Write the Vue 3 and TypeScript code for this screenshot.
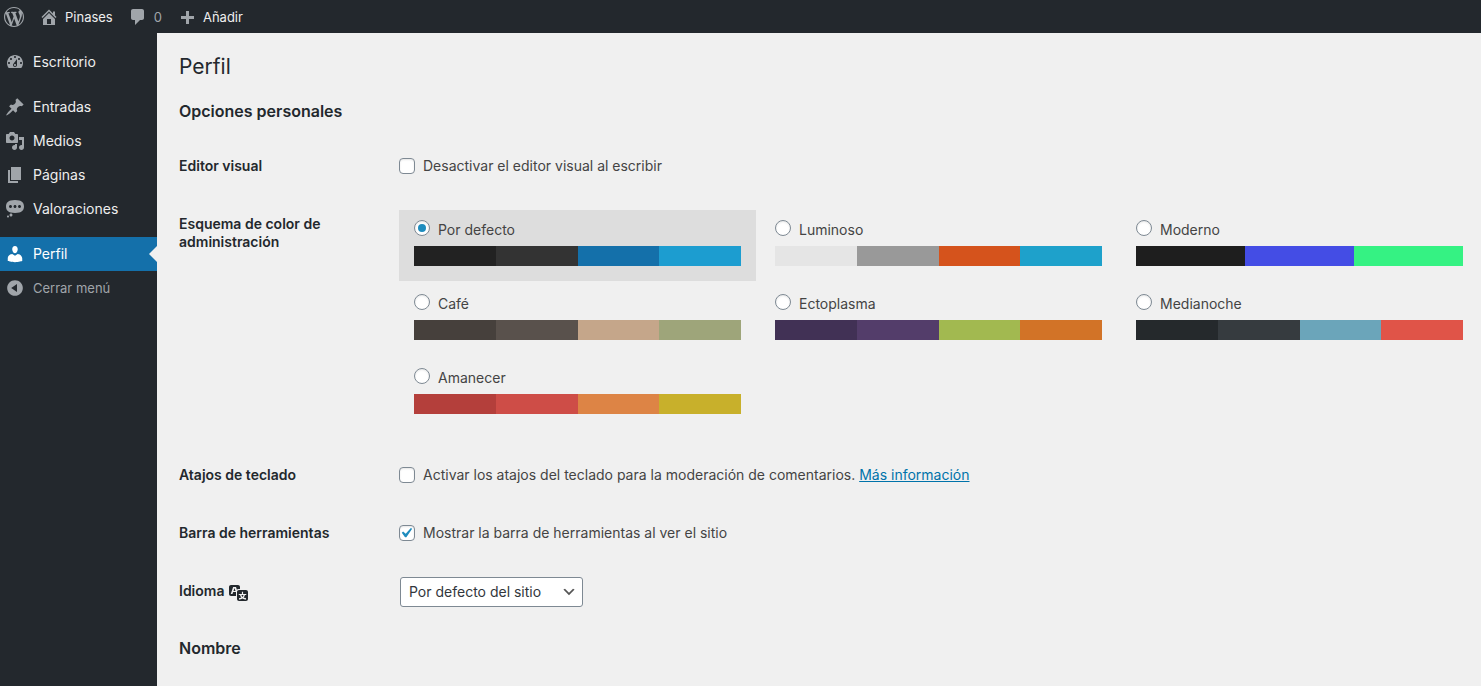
<script setup lang="ts">
import { ref } from 'vue'

interface MenuItem {
  label: string
  icon: string
  gap?: boolean
  current?: boolean
}

interface Scheme {
  id: string
  label: string
  colors: string[]
}

const icons: Record<string, string> = {
  wordpress:
    'M20 10c0-5.51-4.49-10-10-10C4.48 0 0 4.49 0 10c0 5.52 4.48 10 10 10 5.51 0 10-4.48 10-10zM7.78 15.37L4.37 6.22c.55-.02 1.17-.08 1.17-.08.5-.06.44-1.13-.06-1.11 0 0-1.45.11-2.37.11-.18 0-.37 0-.58-.01C4.12 2.69 6.87 1.11 10 1.11c2.33 0 4.45.87 6.05 2.34-.68-.11-1.65.39-1.65 1.58 0 .74.45 1.36.9 2.1.35.61.55 1.36.55 2.46 0 1.49-1.4 5-1.4 5l-3.03-8.37c.54-.02.82-.17.82-.17.5-.05.44-1.25-.06-1.22 0 0-1.44.12-2.38.12-.87 0-2.33-.12-2.33-.12-.5-.03-.56 1.2-.06 1.22l.92.08 1.26 3.41zM17.41 10c.24-.64.74-1.87.43-4.25.7 1.29 1.05 2.71 1.05 4.25 0 3.29-1.73 6.24-4.4 7.78.97-2.59 1.94-5.2 2.92-7.78zM6.1 18.09C3.12 16.65 1.11 13.53 1.11 10c0-1.3.23-2.48.72-3.59C3.25 10.3 4.67 14.2 6.1 18.09zm4.03-6.63l2.58 6.98c-.86.29-1.76.45-2.71.45-.79 0-1.57-.11-2.29-.33.81-2.38 1.62-4.74 2.42-7.1z',
  home: 'M16 8.5l1.53 1.53-1.06 1.06L10 4.6l-6.47 6.49-1.06-1.06L10 2.5l4 4v-2h2v4zm-6-2.46l6 5.99V18H4v-5.97zM12 17v-5H8v5h4z',
  comment: 'M5 2h9c1.1 0 2 .9 2 2v7c0 1.1-.9 2-2 2h-2l-5 5v-5H5c-1.1 0-2-.9-2-2V4c0-1.1.9-2 2-2z',
  plus: 'M17 9v3h-5v5H9v-5H4V9h5V4h3v5h5z',
  dashboard:
    'M3.76 16h12.48c1.1-1.37 1.76-3.11 1.76-5 0-4.42-3.58-8-8-8s-8 3.58-8 8c0 1.89.66 3.63 1.76 5zM10 4c.55 0 1 .45 1 1s-.45 1-1 1-1-.45-1-1 .45-1 1-1zM6 6c.55 0 1 .45 1 1s-.45 1-1 1-1-.45-1-1 .45-1 1-1zm8 0c.55 0 1 .45 1 1s-.45 1-1 1-1-.45-1-1 .45-1 1-1zm-5.37 5.55L12 7v6c0 1.1-.9 2-2 2s-2-.9-2-2c0-.57.24-1.08.63-1.45zM4 10c.55 0 1 .45 1 1s-.45 1-1 1-1-.45-1-1 .45-1 1-1zm12 0c.55 0 1 .45 1 1s-.45 1-1 1-1-.45-1-1 .45-1 1-1zm-5 3c0-.55-.45-1-1-1s-1 .45-1 1 .45 1 1 1 1-.45 1-1z',
  post: 'M10.44 3.02l1.82-1.82 6.36 6.35-1.83 1.82c-1.05-.68-2.48-.57-3.41.36l-.75.75c-.92.93-1.04 2.35-.35 3.41l-1.83 1.82-2.41-2.41-2.8 2.79c-.42.42-3.38 2.71-3.8 2.29s1.86-3.39 2.28-3.81l2.79-2.79L4.1 9.36l1.83-1.82c1.05.69 2.48.57 3.4-.36l.75-.75c.93-.92 1.05-2.35.36-3.41z',
  media:
    'M13 11V4c0-.55-.45-1-1-1h-1.67L9 1H5L3.67 3H2c-.55 0-1 .45-1 1v7c0 .55.45 1 1 1h10c.55 0 1-.45 1-1zM7 4.5c1.38 0 2.5 1.12 2.5 2.5S8.38 9.5 7 9.5 4.5 8.38 4.5 7 5.62 4.5 7 4.5zM14 6h5v10.5c0 1.38-1.12 2.5-2.5 2.5S14 17.88 14 16.5s1.12-2.5 2.5-2.5c.17 0 .34.02.5.05V9h-3V6zm-4 8.05V13h2v3.5c0 1.38-1.12 2.5-2.5 2.5S7 17.88 7 16.5 8.12 14 9.5 14c.17 0 .34.02.5.05z',
  page: 'M6 15V2h10v13H6zm-1 1h8v2H3V5h2v11z',
  status:
    'M10 1c7 0 9 2.91 9 6.5S17 14 10 14s-9-2.91-9-6.5S3 1 10 1zM5.5 9C6.33 9 7 8.33 7 7.5S6.33 6 5.5 6 4 6.67 4 7.5 4.67 9 5.5 9zM10 9c.83 0 1.5-.67 1.5-1.5S10.83 6 10 6s-1.5.67-1.5 1.5S9.17 9 10 9zm4.5 0c.83 0 1.5-.67 1.5-1.5S15.33 6 14.5 6 13 6.67 13 7.5 13.67 9 14.5 9zM6 14.5c.83 0 1.5.67 1.5 1.5s-.67 1.5-1.5 1.5-1.5-.67-1.5-1.5.67-1.5 1.5-1.5zm-3 2c.55 0 1 .45 1 1s-.45 1-1 1-1-.45-1-1 .45-1 1-1z',
  user: 'M10 9.25c-2.27 0-2.73-3.44-2.73-3.44C7 4.02 7.82 2 9.97 2c2.16 0 2.98 2.02 2.71 3.81 0 0-.41 3.44-2.68 3.44zm0 2.57L12.72 10c2.39 0 4.52 2.33 4.52 4.53v2.49s-3.65 1.13-7.24 1.13c-3.65 0-7.24-1.13-7.24-1.13v-2.49c0-2.25 1.94-4.48 4.47-4.48z',
  collapse:
    'M10 2.16c4.33 0 7.84 3.51 7.84 7.84s-3.51 7.84-7.84 7.84S2.16 14.33 2.16 10 5.71 2.16 10 2.16zm2 11.72V6.12L6.18 9.97z',
  translation:
    'M11 7H9.49c-.63 0-1.25.3-1.59.7L7 5H4.13l-2.39 7h1.69l.74-2H7v4H2c-1.1 0-2-.9-2-2V5c0-1.1.9-2 2-2h7c1.1 0 2 .9 2 2v2zM6.51 9H4.49l1-2.93zM10 8h7c1.1 0 2 .9 2 2v7c0 1.1-.9 2-2 2h-7c-1.1 0-2-.9-2-2v-7c0-1.1.9-2 2-2zm7.25 5v-1.08h-3.17V9.75h-1.16v2.17H9.75V13h1.28c.11.85.56 1.85 1.28 2.62-.87.36-1.89.62-2.31.62-.01.02.22.97.2 1.46.84 0 2.21-.5 3.28-1.15 1.09.65 2.48 1.15 3.34 1.15-.02-.49.2-1.44.2-1.46-.43 0-1.49-.27-2.38-.63.7-.77 1.14-1.77 1.25-2.61h1.36zm-3.81 1.93c-.5-.46-.85-1.13-1.01-1.93h2.09c-.17.8-.51 1.47-1 1.93l-.04.03s-.03-.02-.04-.03z',
}

const menu: MenuItem[] = [
  { label: 'Escritorio', icon: 'dashboard' },
  { label: 'Entradas', icon: 'post', gap: true },
  { label: 'Medios', icon: 'media' },
  { label: 'Páginas', icon: 'page' },
  { label: 'Valoraciones', icon: 'status' },
  { label: 'Perfil', icon: 'user', gap: true, current: true },
]

const schemes: Scheme[] = [
  { id: 'fresh', label: 'Por defecto', colors: ['#222222', '#333333', '#1470aa', '#1c9dd0'] },
  { id: 'light', label: 'Luminoso', colors: ['#e5e5e5', '#999999', '#d5531c', '#1ea1cb'] },
  { id: 'modern', label: 'Moderno', colors: ['#1e1e1e', '#444de5', '#35f283'] },
  { id: 'coffee', label: 'Café', colors: ['#46403c', '#59514c', '#c5a68a', '#9ea57a'] },
  { id: 'ectoplasm', label: 'Ectoplasma', colors: ['#413155', '#533d6a', '#a2b950', '#d27327'] },
  { id: 'midnight', label: 'Medianoche', colors: ['#25292c', '#363b3f', '#6ba5ba', '#e05448'] },
  { id: 'sunrise', label: 'Amanecer', colors: ['#b43f3b', '#ce4d47', '#dd8445', '#c8b02b'] },
]

const scheme = ref('fresh')
const disableEditor = ref(false)
const shortcuts = ref(false)
const toolbar = ref(true)
const locale = ref('site-default')
</script>

<template>
  <div class="admin">
    <header class="bar">
      <a href="#" class="bar-item logo" aria-label="Acerca de WordPress">
        <svg class="icon" viewBox="0 0 20 20"><path :d="icons.wordpress" /></svg>
      </a>
      <a href="#" class="bar-item site">
        <svg class="icon" viewBox="0 0 20 20"><path :d="icons.home" fill-rule="evenodd" /></svg>
        <span>Pinases</span>
      </a>
      <a href="#" class="bar-item comments">
        <svg class="icon" viewBox="0 0 20 20"><path :d="icons.comment" /></svg>
        <span class="count">0</span>
      </a>
      <a href="#" class="bar-item add">
        <svg class="icon" viewBox="0 0 20 20"><path :d="icons.plus" /></svg>
        <span>Añadir</span>
      </a>
    </header>

    <div class="body">
      <nav class="side">
        <a
          v-for="item in menu"
          :key="item.label"
          href="#"
          class="menu-item"
          :class="{ gap: item.gap, current: item.current }"
        >
          <svg class="icon" viewBox="0 0 20 20"><path :d="icons[item.icon]" fill-rule="evenodd" /></svg>
          <span>{{ item.label }}</span>
        </a>
        <button type="button" class="menu-item collapse">
          <svg class="icon" viewBox="0 0 20 20"><path :d="icons.collapse" fill-rule="evenodd" /></svg>
          <span>Cerrar menú</span>
        </button>
      </nav>

      <main class="content">
        <h1>Perfil</h1>
        <h2>Opciones personales</h2>

        <form class="form">
          <div class="row">
            <div class="head">Editor visual</div>
            <label class="check">
              <input v-model="disableEditor" type="checkbox" />
              <span>Desactivar el editor visual al escribir</span>
            </label>
          </div>

          <div class="row schemes-row">
            <div id="scheme-title" class="head">Esquema de color de administración</div>
            <div class="schemes" role="radiogroup" aria-labelledby="scheme-title">
              <label
                v-for="s in schemes"
                :key="s.id"
                class="scheme"
                :class="{ selected: scheme === s.id }"
              >
                <span class="scheme-name">
                  <input v-model="scheme" type="radio" name="admin_color" :value="s.id" />
                  <span>{{ s.label }}</span>
                </span>
                <span class="palette">
                  <span v-for="c in s.colors" :key="c" class="swatch" :style="{ background: c }"></span>
                </span>
              </label>
            </div>
          </div>

          <div class="row">
            <div class="head">Atajos de teclado</div>
            <div class="check">
              <input id="shortcuts" v-model="shortcuts" type="checkbox" />
              <span>
                <label for="shortcuts">Activar los atajos del teclado para la moderación de comentarios.</label>
                {{ ' ' }}<a href="#" class="link">Más información</a>
              </span>
            </div>
          </div>

          <div class="row">
            <div class="head">Barra de herramientas</div>
            <label class="check">
              <input v-model="toolbar" type="checkbox" />
              <span>Mostrar la barra de herramientas al ver el sitio</span>
            </label>
          </div>

          <div class="row">
            <label class="head lang" for="locale">
              <span>Idioma</span>
              <svg class="icon" viewBox="0 0 20 20"><path :d="icons.translation" /></svg>
            </label>
            <div class="select">
              <select id="locale" v-model="locale">
                <option value="site-default">Por defecto del sitio</option>
                <option value="es">Español</option>
                <option value="en">English (United States)</option>
              </select>
              <svg class="chevron" viewBox="0 0 20 20"><path d="M5 6l5 5 5-5 2 1-7 7-7-7 2-1z" /></svg>
            </div>
          </div>
        </form>

        <h2 class="next">Nombre</h2>
      </main>
    </div>
  </div>
</template>

<style>
body {
  margin: 0;
  background: #f0f0f0;
}
</style>

<style scoped>
.admin {
  display: flex;
  flex-direction: column;
  min-height: 100vh;
  box-sizing: border-box;
  font-family: Inter, 'Liberation Sans', sans-serif;
  font-size: 14px;
  line-height: 18px;
  color: #444;
}
.icon {
  width: 20px;
  height: 20px;
  flex: none;
  fill: #a0a5aa;
}
.bar {
  display: flex;
  align-items: center;
  gap: 15px;
  height: 33px;
  padding-left: 4px;
  background: #23282d;
  font-size: 13px;
}
.bar-item {
  display: flex;
  align-items: center;
  gap: 6px;
  color: #eee;
  text-decoration: none;
}
.bar .count {
  color: #a0a5aa;
}
.body {
  display: flex;
  flex: 1;
}
.side {
  display: flex;
  flex-direction: column;
  flex: none;
  width: 157px;
  padding-top: 12px;
  box-sizing: border-box;
  background: #23282d;
}
.menu-item {
  position: relative;
  display: flex;
  align-items: center;
  gap: 8px;
  height: 34px;
  padding-left: 5px;
  color: #eee;
  text-decoration: none;
}
.menu-item.gap {
  margin-top: 11px;
}
.menu-item.current {
  background: #1470aa;
  color: #fff;
}
.menu-item.current .icon {
  fill: #fff;
}
.menu-item.current::after {
  content: '';
  position: absolute;
  right: 0;
  top: 50%;
  margin-top: -8px;
  border: 8px solid transparent;
  border-left: 0;
  border-right-color: #f0f0f0;
}
.collapse {
  border: 0;
  background: none;
  font: inherit;
  font-size: 13px;
  color: #a0a5aa;
  text-align: left;
}
.content {
  flex: 1;
  min-width: 0;
  padding: 19px 3px 20px 22px;
}
h1 {
  margin: 0;
  font-size: 21px;
  font-weight: 400;
  line-height: 30px;
  color: #23282d;
}
h2 {
  margin: 17px 0;
  font-size: 16px;
  font-weight: 600;
  line-height: 24px;
  color: #23282d;
}
h2.next {
  margin-top: 13px;
}
.row {
  display: grid;
  grid-template-columns: 220px 1fr;
  align-items: start;
  min-height: 58px;
  padding-top: 17px;
  box-sizing: border-box;
}
.head {
  padding-right: 60px;
  font-weight: 600;
  color: #23282d;
}
.check {
  display: flex;
  align-items: center;
  gap: 8px;
}
.schemes-row {
  padding-bottom: 20px;
}
.schemes {
  display: grid;
  grid-template-columns: repeat(3, 1fr);
  gap: 3px 4px;
  margin-top: -5px;
}
.scheme {
  padding: 10px 15px 15px;
}
.scheme.selected {
  background: #ddd;
}
.scheme-name {
  display: flex;
  gap: 8px;
  height: 26px;
}
.scheme-name > span {
  padding-top: 1px;
}
.palette {
  display: flex;
  height: 20px;
}
.swatch {
  flex: 1;
}
input {
  appearance: none;
  flex: none;
  display: grid;
  place-items: center;
  width: 16px;
  height: 16px;
  margin: 0;
  border: 1px solid #7e8993;
  border-radius: 4px;
  background: #fff;
  box-shadow: inset 0 1px 2px rgba(0, 0, 0, 0.1);
}
input[type='radio'] {
  border-radius: 50%;
}
input[type='radio']:checked::before {
  content: '';
  width: 8px;
  height: 8px;
  border-radius: 50%;
  background: #1e8cbe;
}
input[type='checkbox']:checked::before {
  content: '';
  width: 20px;
  height: 20px;
  margin: -3px -2px -3px -4px;
  background: #1e8cbe;
  clip-path: path('M14.83 4.89l1.34.94-5.81 8.38H9.02L5.78 9.67l1.34-1.25 2.57 2.4z');
}
.link {
  color: #0073aa;
}
.lang {
  display: flex;
  gap: 5px;
}
.lang .icon {
  fill: #23282d;
}
.select {
  display: grid;
  align-items: center;
  justify-items: end;
  width: 183px;
  margin: -5px 0 0 1px;
}
.select > * {
  grid-area: 1 / 1;
}
select {
  appearance: none;
  width: 100%;
  height: 30px;
  padding: 0 24px 0 8px;
  border: 1px solid #7e8993;
  border-radius: 3px;
  background: #fff;
  font: inherit;
  color: #32373c;
}
.chevron {
  width: 16px;
  height: 16px;
  margin-right: 6px;
  fill: #555;
  pointer-events: none;
}
</style>
